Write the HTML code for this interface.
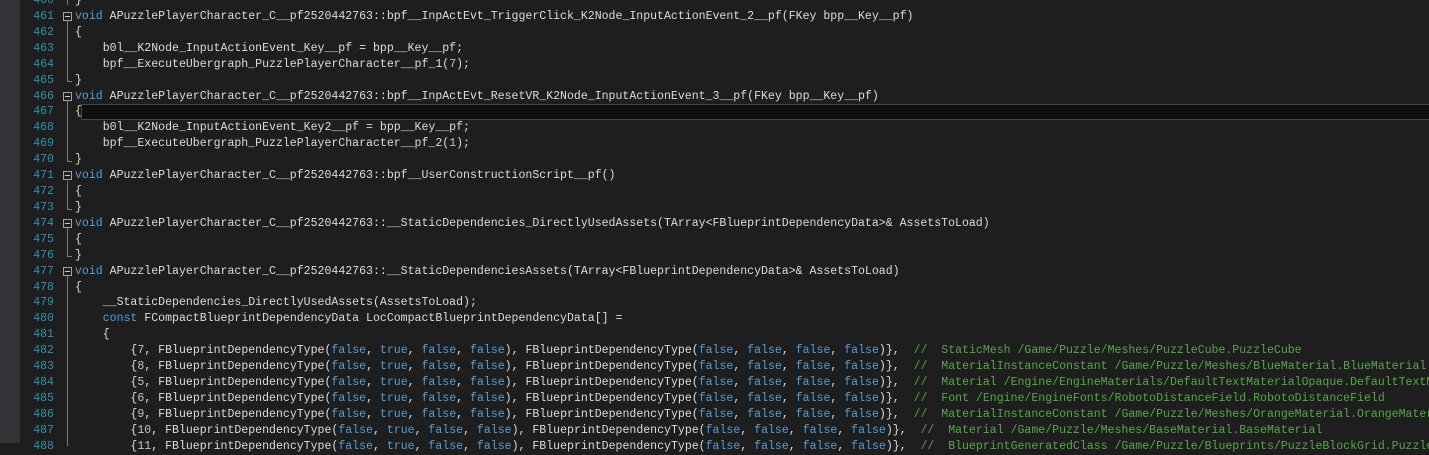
<!DOCTYPE html>
<html><head><meta charset="utf-8"><style>
body{margin:0;width:1429px;height:443px;background:#1e1e1e;overflow:hidden;position:relative;font-family:"Liberation Mono",monospace;font-size:11.55px;}
#strip{position:absolute;left:0;top:0;width:20px;height:443px;background:#333337;}
.l{position:absolute;left:0;height:16px;line-height:16px;white-space:pre;width:1429px;overflow:hidden;}
.n{position:absolute;right:1375px;color:#2b91af;text-align:right;width:40px;}
.c{position:absolute;left:75px;color:#dcdcdc;}
.k{color:#569cd6}.m{color:#b5cea8}.g{color:#57a64a}.y{color:#dcdcaa}
.f{position:absolute;left:63px;width:7px;height:7px;border:1px solid #a5a5a5;top:3px;}
.f:after{content:"";position:absolute;left:1px;top:3px;width:5px;height:1px;background:#c8c8c8;}
.v{position:absolute;left:67px;width:1px;background:#7a7a7a;}
.e{position:absolute;left:67px;width:5px;height:1px;background:#7a7a7a;}
#cur{position:absolute;left:81px;top:104px;width:1350px;height:14px;background:#0f0f0f;border:1px solid #464646;}
</style></head><body>
<div id="strip"></div>
<div id="cur"></div>
<div class="v" style="top:0;height:5px"></div>
<div class="v" style="top:21px;height:60px"></div><div class="e" style="top:81px"></div>
<div class="v" style="top:101px;height:60px"></div><div class="e" style="top:161px"></div>
<div class="v" style="top:181px;height:28px"></div><div class="e" style="top:209px"></div>
<div class="v" style="top:228px;height:28px"></div><div class="e" style="top:256px"></div>
<div class="v" style="top:276px;height:170px"></div>
<script>
var L=[
[460,'<span>}</span>',0],
[461,'<span class="k">void</span> APuzzlePlayerCharacter_C__pf2520442763::bpf__InpActEvt_TriggerClick_K2Node_InputActionEvent_2__pf(FKey bpp__Key__pf)',1],
[462,'{',0],
[463,'    b0l__K2Node_InputActionEvent_Key__pf = bpp__Key__pf;',0],
[464,'    bpf__ExecuteUbergraph_PuzzlePlayerCharacter__pf_1(<span class="m">7</span>);',0],
[465,'}',0],
[466,'<span class="k">void</span> APuzzlePlayerCharacter_C__pf2520442763::bpf__InpActEvt_ResetVR_K2Node_InputActionEvent_3__pf(FKey bpp__Key__pf)',1],
[467,'<span class="y">{</span>',0],
[468,'    b0l__K2Node_InputActionEvent_Key2__pf = bpp__Key__pf;',0],
[469,'    bpf__ExecuteUbergraph_PuzzlePlayerCharacter__pf_2(<span class="m">1</span>);',0],
[470,'<span class="y">}</span>',0],
[471,'<span class="k">void</span> APuzzlePlayerCharacter_C__pf2520442763::bpf__UserConstructionScript__pf()',1],
[472,'{',0],
[473,'}',0],
[474,'<span class="k">void</span> APuzzlePlayerCharacter_C__pf2520442763::__StaticDependencies_DirectlyUsedAssets(TArray&lt;FBlueprintDependencyData&gt;&amp; AssetsToLoad)',1],
[475,'{',0],
[476,'}',0],
[477,'<span class="k">void</span> APuzzlePlayerCharacter_C__pf2520442763::__StaticDependenciesAssets(TArray&lt;FBlueprintDependencyData&gt;&amp; AssetsToLoad)',1],
[478,'{',0],
[479,'    __StaticDependencies_DirectlyUsedAssets(AssetsToLoad);',0],
[480,'    <span class="k">const</span> FCompactBlueprintDependencyData LocCompactBlueprintDependencyData[] =',0],
[481,'    {',0]];
var D=[[482,7,'StaticMesh /Game/Puzzle/Meshes/PuzzleCube.PuzzleCube'],
[483,8,'MaterialInstanceConstant /Game/Puzzle/Meshes/BlueMaterial.BlueMaterial'],
[484,5,'Material /Engine/EngineMaterials/DefaultTextMaterialOpaque.DefaultTextMaterialOpaque'],
[485,6,'Font /Engine/EngineFonts/RobotoDistanceField.RobotoDistanceField'],
[486,9,'MaterialInstanceConstant /Game/Puzzle/Meshes/OrangeMaterial.OrangeMaterial'],
[487,10,'Material /Game/Puzzle/Meshes/BaseMaterial.BaseMaterial'],
[488,11,'BlueprintGeneratedClass /Game/Puzzle/Blueprints/PuzzleBlockGrid.PuzzleBlockGrid_C']];
var F='<span class="k">false</span>',T='<span class="k">true</span>';
D.forEach(function(d){L.push([d[0],'        {<span class="m">'+d[1]+'</span>, FBlueprintDependencyType('+F+', '+T+', '+F+', '+F+'), FBlueprintDependencyType('+F+', '+F+', '+F+', '+F+')},  <span class="g">//  '+d[2]+'</span>',0]);});
var h='';
L.forEach(function(r,i){var t=-7+i*15.92;
h+='<div class="l" style="top:'+t.toFixed(2)+'px"><span class="n">'+r[0]+'</span>'+(r[2]?'<span class="f"></span>':'')+'<span class="c">'+r[1]+'</span></div>';});
document.write(h);
</script>
</body></html>
